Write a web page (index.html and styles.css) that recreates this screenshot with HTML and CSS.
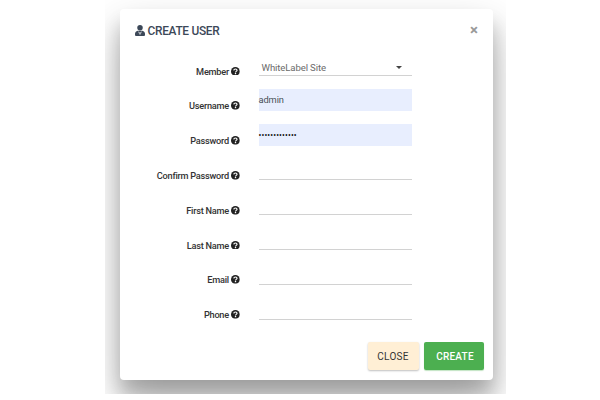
FILE: index.html
```html
<!DOCTYPE html>
<html lang="en">
<head>
<meta charset="utf-8">
<title>Create User</title>
<link rel="stylesheet" href="styles.css">
</head>
<body>
<svg class="defs" aria-hidden="true">
  <symbol id="help" viewBox="0 0 16 16">
    <circle cx="8" cy="8" r="8" fill="currentColor"/>
    <path d="M5 6.2C5.2 4.4 6.4 3.6 8 3.6c1.700 0 3 .9 3 2.400C11 8 8.200 7.900 8.200 9.800" fill="none" stroke="#fff" stroke-width="2.100"/>
    <rect x="7" y="10.900" width="2.400" height="2.200" fill="#fff"/>
  </symbol>
</svg>
<main class="page">
  <section class="modal">
    <header class="modal-header">
      <svg class="user-icon" viewBox="0 0 20 22">
        <circle cx="10" cy="5.500" r="5.500"/>
        <path d="M5.500 11.500h9C18.500 12 20 15 20 18v2q0 2-2 2H2q-2 0-2-2v-2c0-3 1.500-6 5.500-6.500z"/>
        <path class="shirt" d="M6.500 12.500 9 20.500l.3-5.500zM13.500 12.500 11 20.500l-.3-5.500z"/>
      </svg>
      <h1 class="title">CREATE USER</h1>
      <span class="dismiss">×</span>
    </header>
    <form class="fields">
      <div class="row"><label class="label">Member <svg class="help"><use href="#help"/></svg></label><div class="control select"><span>WhiteLabel Site</span><i class="caret"></i></div></div>
      <div class="row"><label class="label">Username <svg class="help"><use href="#help"/></svg></label><div class="control filled">admin</div></div>
      <div class="row"><label class="label">Password <svg class="help"><use href="#help"/></svg></label><div class="control filled password">•••••••••••••</div></div>
      <div class="row"><label class="label">Confirm Password <svg class="help"><use href="#help"/></svg></label><div class="control"></div></div>
      <div class="row"><label class="label">First Name <svg class="help"><use href="#help"/></svg></label><div class="control"></div></div>
      <div class="row"><label class="label">Last Name <svg class="help"><use href="#help"/></svg></label><div class="control"></div></div>
      <div class="row"><label class="label">Email <svg class="help"><use href="#help"/></svg></label><div class="control"></div></div>
      <div class="row"><label class="label">Phone <svg class="help"><use href="#help"/></svg></label><div class="control"></div></div>
    </form>
    <footer class="actions">
      <button class="button close" type="button">CLOSE</button>
      <button class="button create" type="button">CREATE</button>
    </footer>
  </section>
</main>
</body>
</html>
```

FILE: styles.css
```css
* { box-sizing: border-box; }
body {
  margin: 0;
  background: #fff;
  font-family: Roboto, "Liberation Sans", sans-serif;
}
.defs { position: absolute; width: 0; height: 0; }
.page {
  width: 401px;
  height: 394px;
  margin-left: 105px;
  padding: 9px 13px 0 15px;
  overflow: hidden;
}
.modal {
  display: flex;
  flex-direction: column;
  height: 370.5px;
  background: #fff;
  border-radius: 4px;
  box-shadow: 0 15px 18px rgba(0, 0, 0, .18), 0 20px 40px rgba(0, 0, 0, .28);
}
.modal-header {
  display: flex;
  align-items: center;
  height: 43px;
  padding: 0 15px 0 15px;
  color: #3c4858;
}
.user-icon { width: 10px; height: 11px; margin-right: 2.5px; fill: #3c4858; }
.shirt { fill: #fff; }
.title { margin: 0; font-size: 11.9px; font-weight: 500; letter-spacing: -.3px; }
.dismiss { margin: -2px 0 0 auto; color: #999; font-size: 15px; font-weight: 700; line-height: 14px; }
.row {
  display: grid;
  grid-template-columns: 120px 153px;
  column-gap: 18.5px;
  height: 34.8px;
  align-items: start;
}
.label {
  display: flex;
  justify-content: flex-end;
  align-items: center;
  gap: 2.3px;
  padding-top: 13.6px;
  color: #333;
  font-size: 9.2px;
  font-weight: 500;
  letter-spacing: -.25px;
  line-height: 11px;
  white-space: nowrap;
}
.help { width: 8.8px; height: 8.8px; color: #222; }
.control {
  height: 24px;
  border-bottom: 1px solid #d2d2d2;
  color: #495057;
  font-size: 9.3px;
  letter-spacing: -.1px;
  line-height: 22px;
}
.select {
  display: flex;
  justify-content: space-between;
  align-items: center;
  padding: 8px 10px 0 3px;
  color: #6b6b6b;
  font-size: 9.6px;
  letter-spacing: -.12px;
}
.caret {
  border: 3px solid transparent;
  border-top: 3px solid #444;
  border-bottom: 0;
}
.filled { height: 22px; margin-top: 2.2px; border: 0; background: #e8eefe; }
.password { color: #111; font-size: 8.4px; letter-spacing: .12px; line-height: 23px; }
.actions {
  display: flex;
  justify-content: flex-end;
  gap: 5px;
  padding: 12px 9.5px 0 0;
}
.button {
  height: 28px;
  padding: 0;
  border: 0;
  border-radius: 2px;
  font-family: inherit;
  font-size: 10px;
  letter-spacing: .25px;
}
.close { width: 51px; background: #ffefd5; color: #333; box-shadow: 0 1px 2px rgba(0, 0, 0, .25); }
.create { width: 60px; padding-left: 3px; background: #4caf50; color: #fff; font-weight: 500; box-shadow: 0 1px 1px rgba(76, 175, 80, .35); }
```
